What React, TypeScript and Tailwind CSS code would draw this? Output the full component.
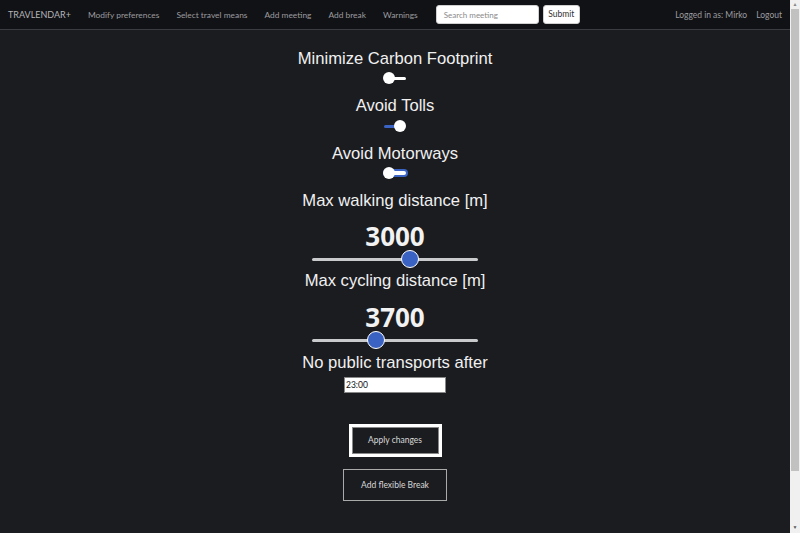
import React from "react";

function Toggle({ state }: { state: 0 | 1 | 2 }) {
  return (
    <div className="relative w-[26px] h-[12px]">
      {state === 0 && (
        <>
          <div className="absolute left-[7px] top-[5px] w-[17px] h-[3px] bg-white rounded-full" />
          <div className="absolute left-[1px] top-[0px] w-[12px] h-[12px] bg-white rounded-full" />
        </>
      )}
      {state === 1 && (
        <>
          <div className="absolute left-[2px] top-[5px] w-[16px] h-[3px] bg-[#3b63c4] rounded-full" />
          <div className="absolute left-[12px] top-[0px] w-[12px] h-[12px] bg-white rounded-full" />
        </>
      )}
      {state === 2 && (
        <>
          <div className="absolute left-[1px] top-[2px] w-[25px] h-[8px] bg-white border-2 border-[#3b63c4] rounded-full" />
          <div className="absolute left-[1px] top-[0px] w-[12px] h-[12px] bg-white rounded-full" />
        </>
      )}
    </div>
  );
}

function Slider({ frac }: { frac: number }) {
  return (
    <div className="relative w-[166px] h-[18px]">
      <div className="absolute left-0 right-0 top-[8px] h-[3px] bg-[#c9cacc] rounded-full" />
      <div
        className="absolute top-[0px] w-[18px] h-[18px] rounded-full bg-[#3a62c2] border-[1.5px] border-white"
        style={{ left: `${frac * 166 - 9}px` }}
      />
    </div>
  );
}

export default function App() {
  const heading = "text-[16.6px] leading-[20px] text-[#f0f0f0] font-['Liberation_Sans',Arial,sans-serif]";
  const big = "text-[26px] leading-[30px] font-bold text-[#f2f2f2] font-['Open_Sans','Noto_Sans',sans-serif]";
  const ui = "font-['Lato','Open_Sans',sans-serif]";
  return (
    <div className="flex w-[800px] h-[533px] overflow-hidden bg-[#1b1c20]">
      <div className="flex-1 flex flex-col">
        <nav className={`h-[30px] pt-[1px] bg-[#111216] border-b border-[#3b3c41] flex items-center pl-[8px] pr-[8px] text-[8.4px] text-[#9c9c9f] ${ui}`}>
          <span className="text-[9px] text-[#b4b4b7]">TRAVLENDAR+</span>
          <div className="flex gap-[17px] ml-[17px]">
            <span>Modify preferences</span>
            <span>Select travel means</span>
            <span>Add meeting</span>
            <span>Add break</span>
            <span>Warnings</span>
          </div>
          <div className="flex items-center ml-[18px] gap-[4px] -mt-[1px]">
            <div className="w-[103px] h-[19px] bg-white rounded-[3px] border border-[#d0d0d0] flex items-center pl-[7px] text-[8px] text-[#8a8a8a]">
              Search meeting
            </div>
            <div className="w-[37px] h-[19px] bg-white rounded-[3px] border border-[#d0d0d0] flex items-center justify-center text-[8.5px] text-[#333]">
              Submit
            </div>
          </div>
          <div className="ml-auto flex gap-[9px] text-[8.5px]">
            <span>Logged in as: Mirko</span>
            <span>Logout</span>
          </div>
        </nav>
        <main className="flex flex-col items-center">
          <div className={`mt-[19px] ${heading}`}>Minimize Carbon Footprint</div>
          <div className="mt-[3px]"><Toggle state={0} /></div>
          <div className={`mt-[12px] ${heading}`}>Avoid Tolls</div>
          <div className="mt-[4px]"><Toggle state={1} /></div>
          <div className={`mt-[12px] ${heading}`}>Avoid Motorways</div>
          <div className="mt-[3px]"><Toggle state={2} /></div>
          <div className={`mt-[12px] ${heading}`}>Max walking distance [m]</div>
          <div className={`mt-[10px] ${big}`}>3000</div>
          <div className="-mt-[1px]"><Slider frac={0.59} /></div>
          <div className={`mt-[3px] ${heading}`}>Max cycling distance [m]</div>
          <div className={`mt-[11px] ${big}`}>3700</div>
          <div className="-mt-[1px]"><Slider frac={0.385} /></div>
          <div className={`mt-[4px] ${heading}`}>No public transports after</div>
          <div className={`mt-[4px] w-[102px] h-[16px] bg-white border border-[#888] flex items-center pl-[1px] text-[8.5px] text-[#111] ${ui}`}>
            23:00
          </div>
          <div className={`mt-[31px] w-[93px] h-[33px] border-[3px] border-white outline outline-1 outline-[#888] -outline-offset-[4px] flex items-center justify-center text-[8.5px] text-[#d8d8d8] ${ui}`}>
            Apply changes
          </div>
          <div className={`mt-[12px] w-[104px] h-[32px] border border-[#aaaaaa] flex items-center justify-center text-[8.5px] text-[#d8d8d8] ${ui}`}>
            Add flexible Break
          </div>
        </main>
      </div>
      <div className="w-[10px] h-full bg-[#f0f0f0] flex flex-col items-center">
        <div className="h-[9px] flex items-center justify-center text-[5px] text-[#888] leading-none">▲</div>
        <div className="w-[8px] h-[462px] bg-[#c1c1c1]" />
        <div className="flex-1" />
        <div className="h-[12px] flex items-center justify-center text-[5px] text-[#555] leading-none">▼</div>
      </div>
    </div>
  );
}
